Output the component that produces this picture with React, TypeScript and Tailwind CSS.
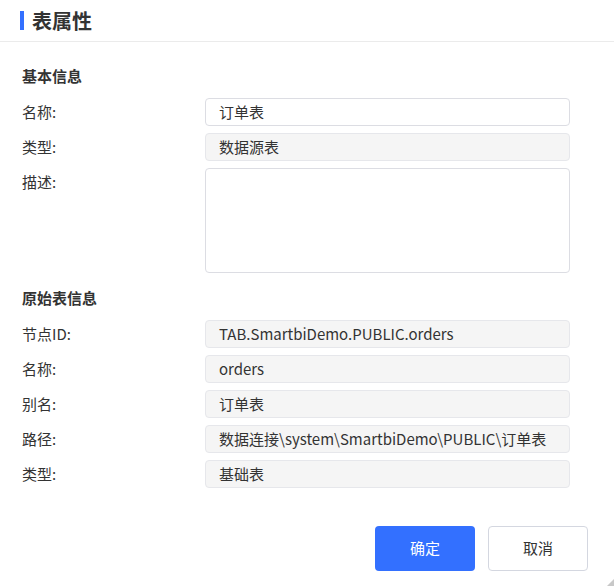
import React from "react";

const basicRows = [
  { label: "名称:", value: "订单表", editable: true },
  { label: "类型:", value: "数据源表", editable: false },
];

const originRows = [
  { label: "节点ID:", value: "TAB.SmartbiDemo.PUBLIC.orders" },
  { label: "名称:", value: "orders" },
  { label: "别名:", value: "订单表" },
  { label: "路径:", value: "数据连接\\system\\SmartbiDemo\\PUBLIC\\订单表" },
  { label: "类型:", value: "基础表" },
];

function Field({ label, value, editable }: { label: string; value: string; editable?: boolean }) {
  return (
    <div className="flex items-center h-[28px]">
      <div className="w-[183px] shrink-0 text-[15px] text-[#333]">{label}</div>
      <div
        className={`flex items-center w-[365px] h-[28px] px-[13px] rounded-[4px] border text-[15px] text-[#333] ${
          editable ? "bg-white border-[#dcdde3]" : "bg-[#f5f5f5] border-[#e6e7eb]"
        }`}
      >
        {value}
      </div>
    </div>
  );
}

export default function App() {
  return (
    <div
      className="relative w-[614px] h-[586px] bg-white text-[#333] overflow-hidden"
      style={{ fontFamily: '"Noto Sans CJK SC", "Noto Sans", sans-serif' }}
    >
      {/* header */}
      <div className="flex items-center h-[42px] border-b border-[#ebebeb] pl-[20px]">
        <div className="w-[4px] h-[19px] bg-[#3370ff] mr-[8px]" />
        <h1 className="text-[20px] font-bold leading-none text-[#333]">表属性</h1>
      </div>

      <div className="px-[22px]">
        <div className="mt-[24px] text-[15px] font-bold leading-[20px]">基本信息</div>
        <div className="mt-[12px] flex flex-col gap-[7px]">
          {basicRows.map((r) => (
            <Field key={r.label} label={r.label} value={r.value} editable={r.editable} />
          ))}
          <div className="flex items-start">
            <div className="w-[183px] shrink-0 text-[15px] leading-[28px]">描述:</div>
            <div className="w-[365px] h-[105px] rounded-[4px] border border-[#dcdde3] bg-white" />
          </div>
        </div>

        <div className="mt-[15px] text-[15px] font-bold leading-[20px]">原始表信息</div>
        <div className="mt-[12px] flex flex-col gap-[7px]">
          {originRows.map((r) => (
            <Field key={r.label + r.value} label={r.label} value={r.value} />
          ))}
        </div>
      </div>

      {/* footer buttons */}
      <div className="flex justify-end gap-[13px] pr-[26px] mt-[38px]">
        <button className="w-[100px] h-[45px] rounded-[4px] bg-[#3370ff] text-white text-[15px]">确定</button>
        <button className="w-[100px] h-[45px] rounded-[4px] border border-[#d4d7e0] bg-white text-[#333] text-[15px]">
          取消
        </button>
      </div>

      {/* resize handle */}
      <div className="absolute right-0 bottom-0 w-0 h-0 border-l-[7px] border-l-transparent border-b-[7px] border-b-[#c8c8c8]" />
    </div>
  );
}
